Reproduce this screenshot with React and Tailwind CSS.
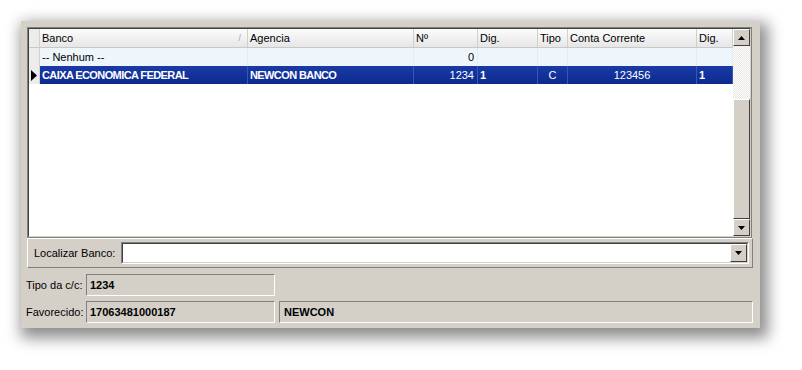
const font = { fontFamily: '"Liberation Sans", Arial, sans-serif' };

const columns = [
  { key: "banco", label: "Banco", w: "w-[208px]", align: "text-left" },
  { key: "agencia", label: "Agencia", w: "w-[166px]", align: "text-left" },
  { key: "numero", label: "Nº", w: "w-[64px]", align: "text-right" },
  { key: "dig", label: "Dig.", w: "w-[60px]", align: "text-left" },
  { key: "tipo", label: "Tipo", w: "w-[30px]", align: "text-center" },
  { key: "conta", label: "Conta Corrente", w: "w-[129px]", align: "text-center" },
  { key: "dig2", label: "Dig.", w: "w-[36px]", align: "text-left" },
];

const rows = [
  { banco: "-- Nenhum --", agencia: "", numero: "0", dig: "", tipo: "", conta: "", dig2: "" },
  {
    banco: "CAIXA ECONOMICA FEDERAL",
    agencia: "NEWCON BANCO",
    numero: "1234",
    dig: "1",
    tipo: "C",
    conta: "123456",
    dig2: "1",
  },
];

const boldCols = ["banco", "agencia", "dig", "dig2"];

function Arrow({ up }) {
  return (
    <svg width="7" height="4" viewBox="0 0 7 4">
      <path d={up ? "M0 4 L3.5 0 L7 4 Z" : "M0 0 L7 0 L3.5 4 Z"} fill="#000" />
    </svg>
  );
}

function ScrollButton({ up, className = "" }) {
  return (
    <div
      className={`flex h-[17px] w-[17px] items-center justify-center border border-t-white border-l-white border-r-[#404040] border-b-[#404040] bg-[#d4d0c8] ${className}`}
    >
      <Arrow up={up} />
    </div>
  );
}

function Grid() {
  return (
    <div className="h-[211px] w-[725px] border border-[#808080]">
      <div className="flex h-full w-full border border-t-[#404040] border-l-[#404040] border-b-[#d4d0c8] border-r-[#d4d0c8] bg-white">
        <div className="flex w-[704px] flex-col">
          <div className="flex h-[19px] bg-gradient-to-b from-[#fcfcfc] to-[#e6e6e6] border-b border-[#c8c8c8]">
            <div className="w-[11px] border-r border-[#d0d0d0] bg-[#ececec]" />
            {columns.map((c) => (
              <div
                key={c.key}
                className={`${c.w} relative flex items-center border-r border-[#d0d0d0] pl-[2px] text-[11px] text-black`}
              >
                {c.label}
                {c.key === "banco" && (
                  <span className="absolute right-[6px] top-[3px] text-[9px] text-[#a0a0a0]">/</span>
                )}
              </div>
            ))}
          </div>
          {rows.map((r, i) => {
            const sel = i === 1;
            return (
              <div key={i} className={`flex h-[18px] ${sel ? "" : "bg-[#eef6fc]"}`}>
                <div className="flex w-[11px] items-center justify-center bg-[#ececec] border-r border-[#d0d0d0]">
                  {sel && (
                    <svg width="6" height="11" viewBox="0 0 6 11">
                      <path d="M0 0 L6 5.5 L0 11 Z" fill="#000" />
                    </svg>
                  )}
                </div>
                {columns.map((c) => (
                  <div
                    key={c.key}
                    className={`${c.w} ${c.align} flex items-center overflow-hidden whitespace-nowrap px-[2px] text-[11px] ${
                      c.align === "text-right" ? "justify-end pr-[3px]" : c.align === "text-center" ? "justify-center" : ""
                    } ${
                      sel
                        ? `bg-gradient-to-b from-[#1a3aa8] to-[#0c2a8c] text-white border-r border-[#3b56b0] ${boldCols.includes(c.key) ? "font-bold tracking-[-0.6px]" : ""}`
                        : "border-r border-[#e4ecf4] text-black"
                    }`}
                  >
                    {r[c.key]}
                  </div>
                ))}
              </div>
            );
          })}
        </div>
        <div className="flex w-[17px] flex-col">
          <ScrollButton up />
          <div className="h-[53px] bg-[repeating-conic-gradient(#ffffff_0_25%,#e8e6e0_0_50%)] bg-[length:2px_2px]" />
          <div className="flex-1 border border-t-white border-l-white border-r-[#404040] border-b-[#404040] bg-[#d4d0c8]" />
          <ScrollButton />
        </div>
      </div>
    </div>
  );
}

function Field({ children, className = "" }) {
  return (
    <div
      className={`flex h-[22px] items-center border border-t-[#808080] border-l-[#808080] border-b-white border-r-white bg-[#d4d0c8] pl-[3px] text-[11px] font-bold text-black ${className}`}
    >
      {children}
    </div>
  );
}

export default function App() {
  return (
    <div className="h-[370px] w-[802px] bg-white pl-[21px] pt-[21px]" style={font}>
      <div className="flex h-[307px] w-[739px] flex-col bg-[#d4d0c8] pl-[6px] pt-[6px] shadow-[4px_6px_14px_4px_rgba(0,0,0,0.45)]">
        <Grid />
        <div className="flex h-[30px] w-[726px] items-center border border-t-white border-l-white border-b-[#808080] border-r-[#808080] pl-[6px] pr-[3px]">
          <span className="w-[87px] text-[11px] text-black">Localizar Banco:</span>
          <div className="flex h-[22px] flex-1 border border-t-[#808080] border-l-[#808080] border-b-white border-r-white">
            <div className="flex flex-1 justify-end border border-t-[#404040] border-l-[#404040] border-b-[#d4d0c8] border-r-[#d4d0c8] bg-white">
              <ScrollButton className="h-[18px] w-[16px]" />
            </div>
          </div>
        </div>
        <div className="mt-[6px] flex items-center -ml-[1px]">
          <span className="w-[60px] text-[11px] text-black">Tipo da c/c:</span>
          <Field className="w-[189px]">1234</Field>
        </div>
        <div className="mt-[5px] flex items-center -ml-[1px]">
          <span className="w-[60px] text-[11px] text-black">Favorecido:</span>
          <Field className="w-[189px]">17063481000187</Field>
          <Field className="ml-[4px] w-[474px] pl-[4px]">NEWCON</Field>
        </div>
      </div>
    </div>
  );
}
